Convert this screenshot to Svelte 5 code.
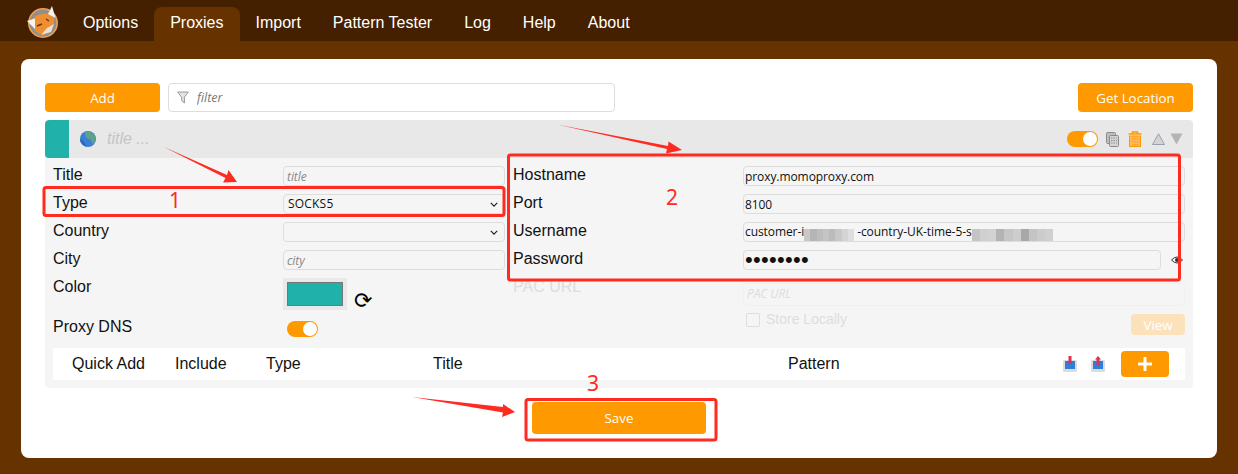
<script>
  const tabs = ['Options', 'Proxies', 'Import', 'Pattern Tester', 'Log', 'Help', 'About'];
  const mosaicA = ['#c9c9c9','#b5b5b5','#bdbdbd','#c4c4c4','#bbbbbb','#c8c8c8','#d4d4d4','#dedede'];
  const mosaicB = ['#c4c4c4','#cfcfcf','#d2d2d2','#b3b3b3','#c6c6c6','#cdcdcd','#a8a8a8','#c4c4c4','#cbcbcb','#d0d0d0'];
</script>

<div class="page">
  <nav class="nav">
    <svg class="logo" viewBox="0 0 34 34" aria-hidden="true">
      <circle cx="17" cy="18" r="15" fill="#f2a050"/>
      <circle cx="17" cy="18" r="13.5" fill="#8f8f8f"/>
      <path d="M6 14 L12 10 Q18 7.500 24 9 L28 13 Q29 20 24 25 L18 30 Q11 29 8 24 Z" fill="#ef8f2f"/>
      <path d="M1 16 L9 13.500 L9 24 Z" fill="#f4f4f4"/>
      <path d="M22 9 L26 1 L29.500 13 Z" fill="#f4f4f4"/>
      <path d="M11 21 L16 19 M20 14 L23 16" stroke="#5a3a20" stroke-width="1.4"/>
      <path d="M15 30 L21 23 L28 19 L25 27 Z" fill="#e8e2da"/>
    </svg>
    {#each tabs as t, i}
      <button class="tab" class:active={i === 1}>{t}</button>
    {/each}
  </nav>

  <main class="main">
    <section class="card">
      <div class="toolbar">
        <button class="btn wide">Add</button>
        <div class="filter">
          <svg class="funnel" viewBox="0 0 12 13" aria-hidden="true"><path d="M.7 1h10.600L7.400 6.200V12L4.600 9.600V6.200Z" fill="#e4e4e4" stroke="#999" stroke-width="1"/></svg>
          <input placeholder="filter" />
        </div>
        <button class="btn wide push">Get Location</button>
      </div>

      <div class="acc-head">
        <span class="swatch"></span>
        <svg class="globe" viewBox="0 0 16 16" aria-hidden="true">
          <circle cx="8" cy="8" r="8" fill="#3a7fd5"/>
          <path d="M5 .8Q9-.4 13 2L15.500 6 14.800 11 12 13 11 9 7 7.500 5 5Z" fill="#5fa08c"/>
          <path d="M0 8L3 9.500 5 13 7 16 3 14 .5 11Z" fill="#2d66b8"/>
        </svg>
        <span class="acc-title">title ...</span>
        <div class="acc-icons">
          <span class="toggle"></span>
          <svg class="ic" viewBox="0 0 13 15" aria-hidden="true">
            <rect x=".5" y=".5" width="9" height="11" rx="1" fill="#bdbdbd" stroke="#8a8a8a"/>
            <rect x="3.500" y="3.500" width="9" height="11" rx="1" fill="#d4d4d4" stroke="#8a8a8a"/>
            <path d="M5 6h6M5 8.500h6M5 11h6" stroke="#8f8f8f" stroke-dasharray="1.500 1"/>
          </svg>
          <svg class="trash" viewBox="0 0 14 16" aria-hidden="true">
            <path d="M.5 3h13M4.500 3V1h5v2" stroke="#f90" stroke-width="1.500" fill="none"/>
            <rect x="1.500" y="5" width="11" height="10.500" fill="#ffb95c" stroke="#f90"/>
            <path d="M4.500 7v7M7 7v7M9.500 7v7" stroke="#f90" stroke-width="1" stroke-dasharray="1.500 1.500"/>
          </svg>
          <svg class="tri" viewBox="0 0 13 12" aria-hidden="true"><path d="M6.500 .8L12.500 11.500H.5Z" fill="#d4d4d4" stroke="#8492a2" stroke-width=".8"/></svg>
          <svg class="tri" viewBox="0 0 13 12" aria-hidden="true"><path d="M.5 .5H12.500L6.500 11.500Z" fill="#b4b4b4"/></svg>
        </div>
      </div>

      <div class="acc-body">
        <div class="cols">
          <div class="col">
            <div class="row"><label for="t">Title</label><input id="t" class="field ital" placeholder="title" /></div>
            <div class="row"><span class="lbl">Type</span>
              <div class="field sel">SOCKS5<svg viewBox="0 0 10 6" aria-hidden="true"><path d="M1 1l4 4 4-4" stroke="#222" stroke-width="1.500" fill="none"/></svg></div></div>
            <div class="row"><span class="lbl">Country</span>
              <div class="field sel"><svg viewBox="0 0 10 6" aria-hidden="true"><path d="M1 1l4 4 4-4" stroke="#222" stroke-width="1.500" fill="none"/></svg></div></div>
            <div class="row"><label for="ci">City</label><input id="ci" class="field ital" placeholder="city" /></div>
            <div class="row tall">
              <span class="lbl">Color</span>
              <div class="color-wrap">
                <span class="color-box"><span class="color"></span></span>
                <span class="refresh">⟳</span>
              </div>
            </div>
            <div class="row dns"><span class="lbl">Proxy DNS</span><span class="toggle small"></span></div>
          </div>

          <div class="col right">
            <div class="row"><label for="h">Hostname</label><input id="h" class="field" value="proxy.momoproxy.com" /></div>
            <div class="row"><label for="p">Port</label><input id="p" class="field" value="8100" /></div>
            <div class="row"><span class="lbl">Username</span>
              <div class="field user">customer-i<span class="mosaic a">{#each mosaicA as m}<i style:background={m}></i>{/each}</span>-country-UK-time-5-s<span class="mosaic b">{#each mosaicB as m}<i style:background={m}></i>{/each}</span></div>
            </div>
            <div class="row"><label for="pw">Password</label>
              <div class="pw-wrap"><input id="pw" class="field pw" type="password" value="12345678" />
                <svg class="eye" viewBox="0 0 12 8" aria-hidden="true"><path d="M.5 4Q6-2 11.500 4 6 10 .5 4Z" fill="none" stroke="#333"/><circle cx="6" cy="4" r="2" fill="#333"/></svg>
              </div>
            </div>
            <div class="row off"><span class="lbl">PAC URL</span><input class="field pac" placeholder="PAC URL" /></div>
            <div class="row store">
              <span class="lbl"></span>
              <div class="store-in">
                <span class="check"></span><span class="store-txt">Store Locally</span>
                <button class="btn view">View</button>
              </div>
            </div>
          </div>
        </div>

        <div class="quick">
          <span class="q q1">Quick Add</span>
          <span class="q q2">Include</span>
          <span class="q q3">Type</span>
          <span class="q q4">Title</span>
          <span class="q q5">Pattern</span>
          <svg class="imp" viewBox="0 0 14 16" aria-hidden="true">
            <rect x="0" y="4" width="14" height="12" rx="1.500" fill="#dcdcdc"/>
            <rect x="2" y="5" width="10" height="8" fill="#2f7ed8"/>
            <path d="M7 8.500 4 5H5.500V0h3v5H10Z" fill="#d8335a"/>
          </svg>
          <svg class="imp two" viewBox="0 0 14 16" aria-hidden="true">
            <rect x="0" y="4" width="14" height="12" rx="1.500" fill="#dcdcdc"/>
            <rect x="2" y="5" width="10" height="8" fill="#2f7ed8"/>
            <path d="M7 0 4 3.500H5.500V9h3V3.500H10Z" fill="#d8335a"/>
          </svg>
          <button class="btn plus" aria-label="Add pattern"><svg viewBox="0 0 14 14" aria-hidden="true"><path d="M7 1v12M1 7h12" stroke="#fff" stroke-width="3" stroke-linecap="round"/></svg></button>
        </div>
      </div>

      <div class="save-row"><button class="btn save">Save</button></div>
    </section>
  </main>

  <svg class="marks" viewBox="0 0 1238 474" aria-hidden="true">
    <g fill="none" stroke="#ff2a20" stroke-width="3">
      <rect x="44" y="187.500" width="460" height="28" rx="2"/>
      <rect x="508.500" y="155" width="671" height="125" rx="2"/>
      <rect x="526" y="399.500" width="190" height="40.500" rx="2"/>
    </g>
    <g fill="#ff2a20">
      <path d="M164 147 L227 175 L228.500 170 L237 182 L223 182.500 L225.500 178 Z"/>
      <path d="M557 124.500 L668 146 L668.500 141.500 L682 150 L666 153.500 L667 149 Z"/>
      <path d="M412 397 L503 407 L503 404 L515 412 L502 417 L503 412.500 Z"/>
    </g>
    <g fill="#ff2a20" font-family="'Noto Sans','Open Sans',sans-serif" font-size="21">
      <text x="169" y="208">1</text>
      <text x="666" y="205">2</text>
      <text x="587" y="391">3</text>
    </g>
  </svg>
</div>

<style>
  :global(body) { margin: 0; background: #663300; }
  .page { position: relative; width: 1238px; height: 474px; background: #663300; overflow: hidden; font-family: "Liberation Sans", Arial, sans-serif; font-size: 16px; color: #111; }
  button { font-family: inherit; border: 0; cursor: pointer; }

  .nav { height: 41px; background: #442000; display: flex; align-items: flex-end; padding-left: 26px; box-sizing: border-box; }
  .logo { width: 34px; height: 34px; margin-right: 7px; align-self: flex-start; margin-top: 5px; }
  .tab { height: 34px; padding: 0 16px 2px; background: transparent; color: #fff; font-size: 16px; border-radius: 8px 8px 0 0; }
  .tab.active { background: #663300; }

  .main { padding: 18px 21px 16px; }
  .card { height: 399px; box-sizing: border-box; background: #fff; border-radius: 8px; padding: 24px 24px 0; }

  .toolbar { display: flex; gap: 8px; height: 29px; margin-bottom: 8px; }
  .btn { background: #ff9900; color: #fff; font: 13.330px "Open Sans", sans-serif; border-radius: 4px; padding: 0; }
  .wide { width: 115px; }
  .push { margin-left: auto; }
  .filter { width: 447px; box-sizing: border-box; border: 1px solid #ddd; border-radius: 4px; display: flex; align-items: center; padding-left: 8px; gap: 6px; }
  .funnel { width: 12px; height: 13px; }
  .filter input { border: 0; outline: 0; flex: 1; font: italic 12.5px "Open Sans", sans-serif; color: #555; background: transparent; padding: 0 2px; }
  .filter input::placeholder { color: #777; }

  .acc-head { height: 38px; background: #e8e8e8; border-radius: 4px 4px 0 0; display: flex; align-items: center; overflow: hidden; }
  .swatch { width: 24px; align-self: stretch; background: #20b2aa; border-radius: 4px 0 0 4px; }
  .globe { width: 16px; height: 16px; margin-left: 11px; }
  .acc-title { margin-left: 11px; color: #c4c4c4; font-style: italic; font-size: 16px; }
  .acc-icons { margin-left: auto; display: flex; align-items: center; padding-right: 10px; }
  .toggle { display: inline-block; width: 31px; height: 16px; border-radius: 8px; background: #ff9900; position: relative; }
  .toggle::after { content: ""; position: absolute; right: 1px; top: 1px; width: 14px; height: 14px; border-radius: 50%; background: #fff; }
  .ic { width: 13px; height: 15px; margin-left: 8px; }
  .trash { width: 14px; height: 16px; margin-left: 9px; }
  .tri { width: 13px; height: 12px; margin-left: 10px; }
  .tri + .tri { margin-left: 5px; }

  .acc-body { background: #f5f5f5; height: 230px; border-radius: 0 0 4px 4px; padding: 8px 8px 0; box-sizing: border-box; display: flex; flex-direction: column; }
  .cols { display: grid; grid-template-columns: 460px 672px; height: 182px; }
  .row { display: grid; grid-template-columns: 230px 222px; height: 20px; margin-bottom: 8px; align-items: start; }
  .col.right .row { grid-template-columns: 230px 442px; }
  label, .lbl { display: block; line-height: 18px; }
  .field { box-sizing: border-box; width: 100%; height: 20px; border: 1px solid #ddd; border-radius: 4px; background: transparent; font: 12px "Open Sans", sans-serif; letter-spacing: -.08px; color: #111; padding: 0 1px; outline: 0; line-height: 18px; }
  .field.ital { font-style: italic; padding: 0 3px; }
  .field::placeholder { color: #888; }
  .sel { display: flex; align-items: center; justify-content: space-between; padding: 0 6px 0 4px; letter-spacing: .2px; }
  .sel svg { width: 8px; height: 5px; margin-left: auto; }
  .user { white-space: nowrap; overflow: hidden; display: flex; align-items: center; }
  .mosaic { display: inline-flex; height: 12px; margin-top: 6px; }
  .mosaic i { width: 6.250px; height: 12px; display: block; }
  .mosaic.a { margin-right: 3px; }
  .mosaic.b i { width: 8.200px; }
  .pw-wrap { display: flex; align-items: center; }
  .pw { width: 418px; font: 22px/18px "Liberation Sans", sans-serif; letter-spacing: .3px; padding: 0 1px; }
  .eye { width: 12px; height: 8px; margin-left: 10px; }
  .tall { height: 32px; margin-bottom: 8px; }
  .color-wrap { display: flex; align-items: flex-end; }
  .color-box { width: 64px; height: 32px; background: #e9e9e9; display: flex; align-items: center; justify-content: center; }
  .color { width: 56px; height: 24px; background: #20b2aa; border: 1px solid #767676; box-sizing: border-box; display: block; }
  .refresh { font-size: 22px; line-height: 20px; margin-left: 7px; margin-bottom: -1px; color: #000; font-family: "DejaVu Sans", sans-serif; }
  .toggle.small { margin-left: 4px; margin-top: 3px; }
  .off { height: 28px; margin-bottom: 8px; color: #ddd; }
  .pac { border-color: #f0f0f0; height: 23px; margin-top: 5px; padding: 0 3px 3px; }
  .pac::placeholder { color: #ddd; font-style: italic; }
  .store-in { display: flex; align-items: flex-start; height: 21px; }
  .check { width: 12px; height: 12px; border: 1px solid #ddd; border-radius: 2px; margin: -1px 0 0 3px; }
  .store-txt { margin: -3px 0 0 6px; color: #ddd; font-size: 14px; line-height: 16px; }
  .view { margin-left: auto; width: 54px; height: 21px; background: #fce2bb; border-radius: 4px; }

  .quick { height: 32px; background: #fff; display: flex; align-items: center; }
  .q1 { margin-left: 19px; width: 103px; }
  .q2 { width: 91px; }
  .q3 { width: 167px; }
  .q4 { width: 355px; }
  .q5 { width: 275px; }
  .imp { width: 14px; height: 16px; }
  .imp.two { margin-left: 14px; }
  .plus { width: 48px; height: 26px; margin-left: 16px; display: flex; align-items: center; justify-content: center; }
  .plus svg { width: 14px; height: 14px; }

  .save-row { display: flex; justify-content: center; padding-top: 14px; }
  .save { width: 174px; height: 32px; }

  .marks { position: absolute; inset: 0; width: 1238px; height: 474px; pointer-events: none; }
</style>
